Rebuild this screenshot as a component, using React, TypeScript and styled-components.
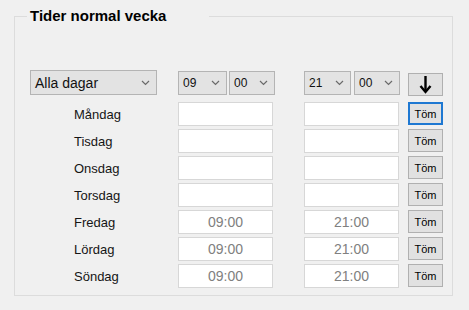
import styled, { createGlobalStyle } from 'styled-components'
import { FunctionComponent } from 'react'

const GlobalStyle = createGlobalStyle`
  html, body {
    margin: 0;
    padding: 0;
    background: #f0f0f0;
    font-family: "Liberation Sans", Arial, sans-serif;
  }
`

const Page = styled.div`
  width: 469px;
  height: 310px;
  padding-top: 9px;
  box-sizing: border-box;
  background: #f0f0f0;
`

const Group = styled.fieldset`
  margin: 0 0 0 14px;
  width: 439px;
  box-sizing: border-box;
  border: 1px solid #dcdcdc;
  padding: 0 0 7px 15px;
`

const Title = styled.legend`
  font-size: 15px;
  line-height: 14px;
  font-weight: bold;
  color: #000;
  padding: 0 43px 0 3px;
  margin-left: -3px;
`

const Grid = styled.div`
  display: grid;
  grid-template-columns: 148px 126px 104px 35px;
  grid-template-rows: 29px repeat(7, 24px);
  row-gap: 3px;
  margin-top: 47px;
`

const Combo = styled.div<{ $w: number; $top?: number; $size?: number }>`
  width: ${(p) => p.$w}px;
  height: ${(p) => (p.$top ? 24 : 25)}px;
  margin-top: ${(p) => p.$top ?? 0}px;
  box-sizing: border-box;
  border: 1px solid #b4b4b4;
  background: #e3e3e3;
  display: flex;
  align-items: center;
  justify-content: space-between;
  padding: 0 6px 0 4px;
  font-size: ${(p) => p.$size ?? 12}px;
  color: #111;
`

const Pair = styled.div<{ $gap: number }>`
  display: flex;
  gap: ${(p) => p.$gap}px;
  align-self: start;
`

const DayLabel = styled.div`
  padding-left: 44px;
  font-size: 13px;
  color: #151515;
  display: flex;
  align-items: center;
`

const TimeBox = styled.input`
  width: 95px;
  height: 24px;
  box-sizing: border-box;
  border: 1px solid #d7d7d7;
  background: #fff;
  text-align: center;
  font-family: "Liberation Sans", Arial, sans-serif;
  font-size: 14px;
  color: #808080;
  padding: 0;
  outline: none;
`

const Button = styled.button<{ $focused?: boolean }>`
  width: 35px;
  height: 23px;
  box-sizing: border-box;
  border: ${(p) => (p.$focused ? '2px solid #1e78d2' : '1px solid #b0b0b0')};
  background: #e1e1e1;
  font-family: "Liberation Sans", Arial, sans-serif;
  font-size: 11px;
  color: #000;
  padding: 0;
  display: flex;
  align-items: center;
  justify-content: center;
`

const ArrowButton = styled(Button)`
  margin-top: 3px;
`

const Chevron: FunctionComponent = () => (
  <svg width="9" height="6" viewBox="0 0 9 6">
    <path d="M1 1 L4.5 4.5 L8 1" fill="none" stroke="#6a6a6a" strokeWidth="1.2" />
  </svg>
)

const DownArrow: FunctionComponent = () => (
  <svg width="13" height="18" viewBox="0 0 13 18">
    <path d="M6.5 0 V15" stroke="#000" strokeWidth="2.4" />
    <path d="M1.5 10 L6.5 16 L11.5 10" fill="none" stroke="#000" strokeWidth="2.4" />
  </svg>
)

interface DayRowProps {
  name: string
  from: string
  to: string
  focused?: boolean
}

const DayRow: FunctionComponent<DayRowProps> = ({ name, from, to, focused }) => (
  <>
    <DayLabel>{name}</DayLabel>
    <TimeBox readOnly value={from} />
    <TimeBox readOnly value={to} />
    <Button $focused={focused}>Töm</Button>
  </>
)

const days: DayRowProps[] = [
  { name: 'Måndag', from: '', to: '', focused: true },
  { name: 'Tisdag', from: '', to: '' },
  { name: 'Onsdag', from: '', to: '' },
  { name: 'Torsdag', from: '', to: '' },
  { name: 'Fredag', from: '09:00', to: '21:00' },
  { name: 'Lördag', from: '09:00', to: '21:00' },
  { name: 'Söndag', from: '09:00', to: '21:00' },
]

export default function App() {
  return (
    <Page>
      <GlobalStyle />
      <Group>
        <Title>Tider normal vecka</Title>
        <Grid>
          <Combo $w={127} $size={14}>
            Alla dagar <Chevron />
          </Combo>
          <Pair $gap={2}>
            <Combo $w={49} $top={1}>09 <Chevron /></Combo>
            <Combo $w={46} $top={1}>00 <Chevron /></Combo>
          </Pair>
          <Pair $gap={3}>
            <Combo $w={47} $top={1}>21 <Chevron /></Combo>
            <Combo $w={46} $top={1}>00 <Chevron /></Combo>
          </Pair>
          <ArrowButton>
            <DownArrow />
          </ArrowButton>
          {days.map((d) => (
            <DayRow key={d.name} {...d} />
          ))}
        </Grid>
      </Group>
    </Page>
  )
}
